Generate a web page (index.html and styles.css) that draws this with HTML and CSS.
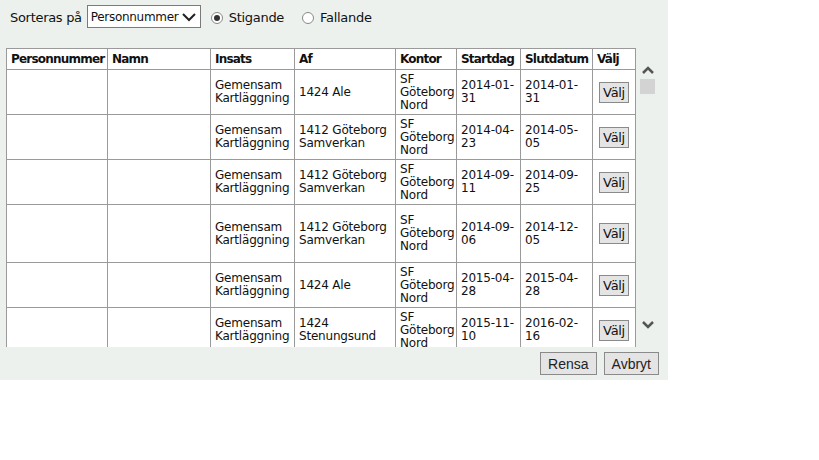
FILE: index.html
```html
<!DOCTYPE html>
<html lang="sv">
<head>
  <meta charset="UTF-8">
  <title>Sök insats</title>
  <link rel="stylesheet" href="styles.css">
</head>
<body>
  <div class="panel">
    <!-- Sortering -->
    <div class="sort-row">
      <span class="sort-label">Sorteras på</span>
      <div class="select">
        <span>Personnummer</span>
        <svg width="16" height="10" viewBox="0 0 16 10"><path d="M2 2 L8 8 L14 2" fill="none" stroke="#222" stroke-width="2"/></svg>
      </div>
      <label class="radio"><span class="dot checked"></span>Stigande</label>
      <label class="radio"><span class="dot"></span>Fallande</label>
    </div>

    <div class="list-area">
      <div class="scroll-box">
        <table class="result">
          <thead>
            <tr>
              <th class="c-pnr">Personnummer</th>
              <th class="c-namn">Namn</th>
              <th class="c-insats">Insats</th>
              <th class="c-af">Af</th>
              <th class="c-kontor">Kontor</th>
              <th class="c-start">Startdag</th>
              <th class="c-slut">Slutdatum</th>
              <th class="c-valj">Välj</th>
            </tr>
          </thead>
          <tbody>
            <tr>
              <td></td><td></td>
              <td>Gemensam<br>Kartläggning</td>
              <td>1424 Ale</td>
              <td>SF<br>Göteborg<br>Nord</td>
              <td>2014-01-<br>31</td>
              <td>2014-01-<br>31</td>
              <td class="c-valj"><button class="btn-valj">Välj</button></td>
            </tr>
            <tr>
              <td></td><td></td>
              <td>Gemensam<br>Kartläggning</td>
              <td>1412 Göteborg<br>Samverkan</td>
              <td>SF<br>Göteborg<br>Nord</td>
              <td>2014-04-<br>23</td>
              <td>2014-05-<br>05</td>
              <td class="c-valj"><button class="btn-valj">Välj</button></td>
            </tr>
            <tr>
              <td></td><td></td>
              <td>Gemensam<br>Kartläggning</td>
              <td>1412 Göteborg<br>Samverkan</td>
              <td>SF<br>Göteborg<br>Nord</td>
              <td>2014-09-<br>11</td>
              <td>2014-09-<br>25</td>
              <td class="c-valj"><button class="btn-valj">Välj</button></td>
            </tr>
            <tr class="tall">
              <td></td><td></td>
              <td>Gemensam<br>Kartläggning</td>
              <td>1412 Göteborg<br>Samverkan</td>
              <td>SF<br>Göteborg<br>Nord</td>
              <td>2014-09-<br>06</td>
              <td>2014-12-<br>05</td>
              <td class="c-valj"><button class="btn-valj">Välj</button></td>
            </tr>
            <tr>
              <td></td><td></td>
              <td>Gemensam<br>Kartläggning</td>
              <td>1424 Ale</td>
              <td>SF<br>Göteborg<br>Nord</td>
              <td>2015-04-<br>28</td>
              <td>2015-04-<br>28</td>
              <td class="c-valj"><button class="btn-valj">Välj</button></td>
            </tr>
            <tr>
              <td></td><td></td>
              <td>Gemensam<br>Kartläggning</td>
              <td>1424<br>Stenungsund</td>
              <td>SF<br>Göteborg<br>Nord</td>
              <td>2015-11-<br>10</td>
              <td>2016-02-<br>16</td>
              <td class="c-valj"><button class="btn-valj">Välj</button></td>
            </tr>
          </tbody>
        </table>
      </div>

      <!-- Scrollbar -->
      <div class="scrollbar">
        <svg class="arrow-up" width="14" height="10" viewBox="0 0 14 10"><path d="M2 8 L7 3 L12 8" fill="none" stroke="#555" stroke-width="2.5"/></svg>
        <div class="thumb"></div>
        <div class="track"></div>
        <svg class="arrow-down" width="14" height="10" viewBox="0 0 14 10"><path d="M2 2 L7 7 L12 2" fill="none" stroke="#555" stroke-width="2.5"/></svg>
      </div>
    </div>

    <div class="actions">
      <button class="btn">Rensa</button>
      <button class="btn">Avbryt</button>
    </div>
  </div>
</body>
</html>
```

FILE: styles.css
```css
/* General */
body {
  margin: 0;
  background: #ffffff;
  font-family: 'DejaVu Sans', Verdana, sans-serif;
  color: #111;
}

.panel {
  width: 668px;
  height: 380px;
  box-sizing: border-box;
  background: #edf1ed;
  padding: 5px 9px 0 6px;
}

/* Sort row */
.sort-row {
  display: flex;
  align-items: center;
  height: 23px;
  font-size: 13px;
  letter-spacing: -0.3px;
}

.sort-label {
  margin-left: 4px;
  margin-right: 5px;
  padding-top: 2px;
}

.select {
  width: 114px;
  height: 23px;
  flex-shrink: 0;
  box-sizing: border-box;
  border: 1px solid #7a7a7a;
  background: #fff;
  display: flex;
  align-items: center;
  justify-content: space-between;
  padding: 0 3px 0 3px;
  font-size: 12px;
  letter-spacing: -0.3px;
}

.radio {
  display: flex;
  align-items: center;
  margin-left: 10px;
  margin-right: 8px;
  padding-top: 2px;
}

.dot {
  width: 12px;
  height: 12px;
  border: 1px solid #888;
  border-radius: 50%;
  background: #fff;
  margin-right: 6px;
  box-sizing: border-box;
  position: relative;
}

.dot.checked::after {
  content: "";
  position: absolute;
  left: 2px;
  top: 2px;
  width: 6px;
  height: 6px;
  border-radius: 50%;
  background: #333;
}

/* List */
.list-area {
  display: flex;
  margin-top: 20px;
}

.scroll-box {
  width: 630px;
  height: 299px;
  overflow: hidden;
  flex-shrink: 0;
}

.result {
  border-collapse: collapse;
  table-layout: fixed;
  width: 630px;
  font-size: 12px;
  letter-spacing: -0.2px;
  background: #fff;
}

.result th,
.result td {
  border: 1px solid #9a9a9a;
  padding: 0 4px;
  text-align: left;
  vertical-align: middle;
  line-height: 13px;
  overflow: hidden;
  white-space: nowrap;
}

.result th {
  height: 19px;
  padding-top: 1px;
  font-weight: bold;
  letter-spacing: -0.8px;
}

.result td {
  height: 44px;
}

.result tr.tall td {
  height: 57px;
}

.c-pnr { width: 92px; }
.c-namn { width: 94px; }
.c-insats { width: 75px; }
.c-af { width: 92px; }
.c-kontor { width: 52px; }
.c-start { width: 55px; }
.c-slut { width: 63px; }
.c-valj { width: 34px; }

td.c-valj {
  text-align: center;
  padding: 0;
}

.btn-valj {
  font-family: 'DejaVu Sans', Verdana, sans-serif;
  font-size: 13px;
  letter-spacing: -0.3px;
  padding: 0 3px;
  height: 21px;
  background: #e4e4e4;
  border: 1px solid #8a8a8a;
  color: #111;
}

/* Scrollbar */
.scrollbar {
  width: 23px;
  display: flex;
  flex-direction: column;
  align-items: center;
}

.arrow-up {
  margin-top: 17px;
}

.thumb {
  width: 15px;
  height: 15px;
  margin-top: 4px;
  background: #d3d3d3;
}

.track {
  flex: 1;
}

.arrow-down {
  margin-bottom: 17px;
}

/* Actions */
.actions {
  display: flex;
  justify-content: flex-end;
  gap: 7px;
  margin-top: 5px;
}

.btn {
  font-family: 'Liberation Sans', Arial, sans-serif;
  font-size: 14px;
  height: 23px;
  padding: 0 7px;
  background: #e4e4e4;
  border: 1px solid #8a8a8a;
  color: #222;
}
```
